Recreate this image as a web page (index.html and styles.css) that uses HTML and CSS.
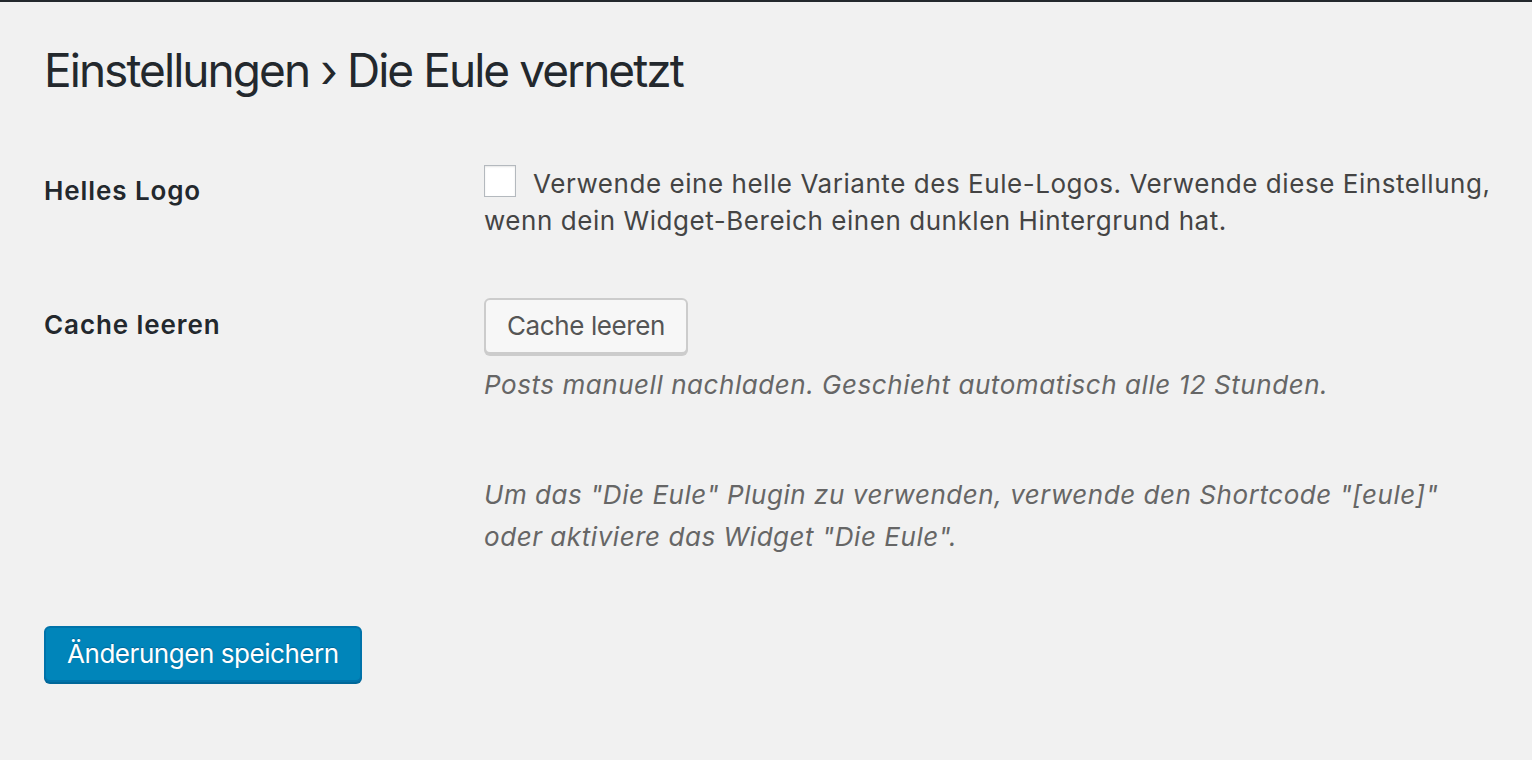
FILE: index.html
```html
<!DOCTYPE html>
<html lang="de">
<head>
<meta charset="utf-8">
<title>Einstellungen › Die Eule vernetzt</title>
<link rel="stylesheet" href="styles.css">
</head>
<body>
<div class="wrap">
  <h1 class="title">Einstellungen › Die Eule vernetzt</h1>
  <form class="form">
    <div class="row row-logo">
      <div class="label">Helles Logo</div>
      <div class="field">
        <label class="check-label"><span class="checkbox"></span>Verwende eine helle Variante des Eule-Logos. Verwende diese Einstellung, wenn dein Widget-Bereich einen dunklen Hintergrund hat.</label>
      </div>
    </div>
    <div class="row row-cache">
      <div class="label">Cache leeren</div>
      <div class="field">
        <button type="button" class="button">Cache leeren</button>
        <p class="description">Posts manuell nachladen. Geschieht automatisch alle 12 Stunden.</p>
      </div>
    </div>
    <div class="row row-info">
      <div class="label"></div>
      <div class="field">
        <p class="description info">Um das "Die Eule" Plugin zu verwenden, verwende den Shortcode "[eule]" oder aktiviere das Widget "Die Eule".</p>
      </div>
    </div>
    <div class="submit">
      <button type="button" class="button-primary">Änderungen speichern</button>
    </div>
  </form>
</div>
</body>
</html>
```
FILE: styles.css
```css
html, body {
  margin: 0;
  padding: 0;
  height: 100%;
}
body {
  background: #f1f1f1;
  border-top: 2px solid #23282d;
  font-family: "Inter", "Liberation Sans", sans-serif;
  color: #444;
  font-size: 26px;
  box-sizing: border-box;
}
.wrap {
  padding: 0 0 0 44px;
}
.title {
  margin: 0;
  padding-top: 39px;
  font-size: 46px;
  font-weight: 400;
  line-height: 58px;
  letter-spacing: -1.95px;
  color: #23282d;
}
.form {
  margin-top: 61px;
}
.row {
  display: grid;
  grid-template-columns: 440px 1008px;
}
.label {
  font-weight: 600;
  color: #23282d;
  line-height: 34px;
  padding-top: 14px;
  letter-spacing: 0.9px;
}
.check-label {
  display: block;
  line-height: 37px;
  padding-top: 5px;
  letter-spacing: 0.55px;
}
.checkbox {
  display: inline-block;
  width: 30px;
  height: 30px;
  border: 1px solid #b4b9be;
  background: #fff;
  box-shadow: inset 0 1px 2px rgba(0,0,0,0.1);
  vertical-align: -4px;
  margin-right: 17px;
}
.row-cache {
  margin-top: 59px;
}
.row-cache .label {
  padding-top: 10px;
}
.button {
  font: inherit;
  font-size: 26px;
  letter-spacing: -0.4px;
  color: #555;
  background: #f7f7f7;
  border: 2px solid #ccc;
  border-radius: 6px;
  box-shadow: 0 2px 0 #ccc;
  height: 56px;
  padding: 0 21px;
  line-height: 52px;
  cursor: pointer;
}
.description {
  margin: 10px 0 0;
  font-style: italic;
  color: #666;
  line-height: 42px;
  letter-spacing: 0.55px;
}
.row-info {
  margin-top: 68px;
}
.info {
  margin-top: 0;
}
.submit {
  margin-top: 68px;
}
.button-primary {
  font: inherit;
  font-size: 26px;
  letter-spacing: -0.45px;
  color: #fff;
  background: #0085ba;
  border: 2px solid #0073aa;
  border-radius: 6px;
  box-shadow: 0 2px 0 #006799;
  text-shadow: 0 -1px 1px #006799;
  height: 56px;
  padding: 0 21px;
  line-height: 52px;
  cursor: pointer;
}
```
